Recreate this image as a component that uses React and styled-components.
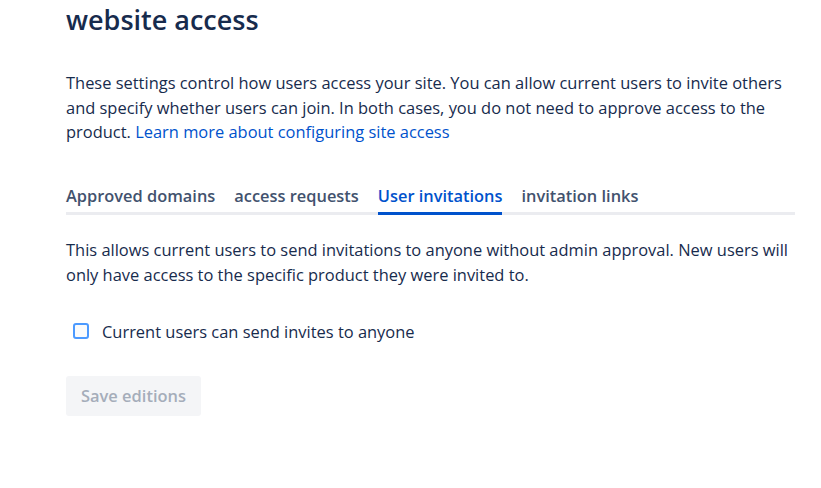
import React from 'react';
import styled, { createGlobalStyle } from 'styled-components';

const Global = createGlobalStyle`
    html, body {
        margin: 0;
        padding: 0;
        background: #ffffff;
    }
    body {
        font-family: "Open Sans", "Noto Sans", sans-serif;
        color: #172b4d;
    }
`

const Page = styled.div`
    padding: 0 26px 0 66px;
    width: 729px;
`

const Title = styled.h1`
    margin: 0;
    padding-top: 2px;
    font-size: 27px;
    font-weight: 600;
    line-height: 36px;
    color: #172b4d;
`

const Intro = styled.p`
    margin: 33px 0 0;
    font-size: 16.45px;
    line-height: 24.5px;
    color: #172b4d;
`

const Link = styled.a`
    color: #0052cc;
    text-decoration: none;
`

const Tabs = styled.div`
    display: flex;
    gap: 19px;
    margin-top: 39px;
    border-bottom: 3px solid #ebecf0;
`

const Tab = styled.div`
    font-size: 16.4px;
    font-weight: 600;
    line-height: 24px;
    padding-bottom: 4px;
    margin-bottom: -3px;
    color: ${p => (p.active ? '#0052cc' : '#42526e')};
    border-bottom: 3px solid ${p => (p.active ? '#0052cc' : 'transparent')};
`

const Description = styled.p`
    margin: 22px 0 0;
    font-size: 16.45px;
    line-height: 25px;
    color: #172b4d;
`

const CheckRow = styled.label`
    display: flex;
    align-items: center;
    gap: 13px;
    margin-top: 33px;
    padding-left: 7px;
    font-size: 16.45px;
    color: #172b4d;
`

const Box = styled.span`
    width: 12px;
    height: 12px;
    border: 2px solid #4c9aff;
    border-radius: 3px;
    background: #fafbfc;
`

const SaveButton = styled.button`
    margin-top: 33px;
    height: 40px;
    padding: 0 15px;
    border: none;
    border-radius: 3px;
    background: #f4f5f7;
    color: #a5adba;
    font-family: inherit;
    font-size: 16.45px;
    font-weight: 600;
`

const tabs = ['Approved domains', 'access requests', 'User invitations', 'invitation links']

export default function App() {
    return (
        <Page>
            <Global />
            <Title>website access</Title>
            <Intro>
                These settings control how users access your site. You can allow current users to invite others
                and specify whether users can join. In both cases, you do not need to approve access to the
                product. <Link href="#">Learn more about configuring site access</Link>
            </Intro>
            <Tabs>
                {tabs.map(t => (
                    <Tab key={t} active={t === 'User invitations'}>{t}</Tab>
                ))}
            </Tabs>
            <Description>
                This allows current users to send invitations to anyone without admin approval. New users will
                only have access to the specific product they were invited to.
            </Description>
            <CheckRow>
                <Box />
                Current users can send invites to anyone
            </CheckRow>
            <SaveButton disabled>Save editions</SaveButton>
        </Page>
    )
}
